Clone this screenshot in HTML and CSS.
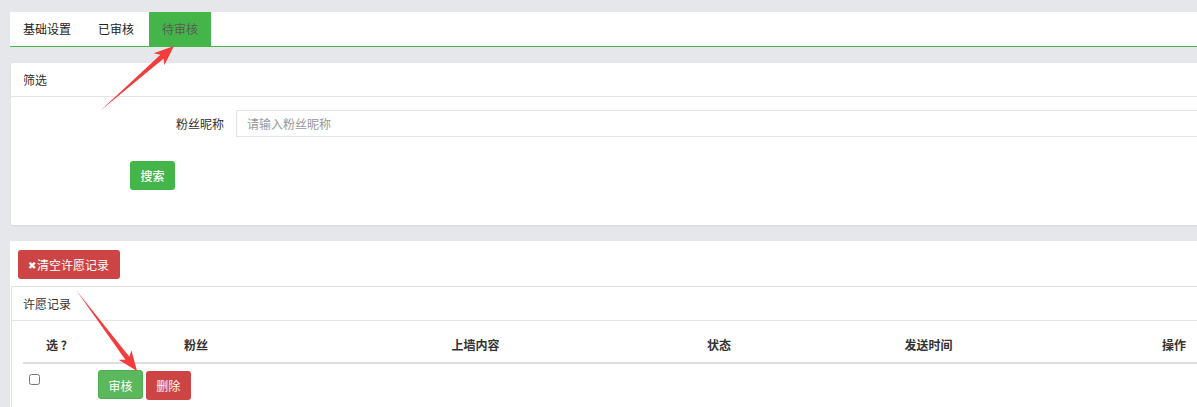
FILE: index.html
```html
<!DOCTYPE html>
<html lang="zh-CN">
<head>
    <meta charset="UTF-8">
    <title>许愿墙 - 待审核</title>
    <link rel="stylesheet" href="styles.css">
</head>
<body>
    <div class="page">
        <!-- 顶部标签 -->
        <ul class="tabs">
            <li class="tab">基础设置</li>
            <li class="tab">已审核</li>
            <li class="tab active">待审核</li>
        </ul>

        <!-- 筛选 -->
        <div class="panel filter-panel">
            <div class="panel-heading">筛选</div>
            <div class="panel-body">
                <div class="form-row">
                    <label class="form-label">粉丝昵称</label>
                    <input class="form-input" type="text" placeholder="请输入粉丝昵称">
                </div>
                <div class="form-actions">
                    <button class="btn btn-green">搜索</button>
                </div>
            </div>
        </div>

        <!-- 许愿记录 -->
        <div class="record-wrap">
            <div class="toolbar">
                <button class="btn btn-red btn-clear"><span class="icon-x">✖</span>清空许愿记录</button>
            </div>
            <div class="panel record-panel">
                <div class="panel-heading">许愿记录</div>
                <div class="panel-body">
                    <table class="table">
                        <colgroup>
                            <col style="width: 67px">
                            <col style="width: 212px">
                            <col style="width: 347px">
                            <col style="width: 140px">
                            <col style="width: 279px">
                            <col style="width: 212px">
                        </colgroup>
                        <thead>
                            <tr>
                                <th>选 ?</th>
                                <th>粉丝</th>
                                <th>上墙内容</th>
                                <th>状态</th>
                                <th>发送时间</th>
                                <th>操作</th>
                            </tr>
                        </thead>
                        <tbody>
                            <tr>
                                <td><input class="check" type="checkbox"></td>
                                <td class="ops">
                                    <button class="btn btn-success">审核</button>
                                    <button class="btn btn-red">删除</button>
                                </td>
                                <td></td>
                                <td></td>
                                <td></td>
                                <td></td>
                            </tr>
                        </tbody>
                    </table>
                </div>
            </div>
        </div>
    </div>

    <!-- 标注箭头 -->
    <svg class="marks" width="1197" height="407" viewBox="0 0 1197 407">
        <polygon points="100,111 163.7,58.5 164.3,65.2 174,46 153.7,53.2 160.4,54.7" fill="#f33c3c"/>
        <polygon points="76,290 125.4,359.7 118.6,359.8 137,371 131.4,350.2 129.4,356.7" fill="#f33c3c"/>
    </svg>
</body>
</html>
```

FILE: styles.css
```css
* {
    margin: 0;
    padding: 0;
    box-sizing: border-box;
}

body {
    font-family: "Noto Sans CJK SC", "Noto Sans", sans-serif;
    font-size: 12px;
    color: #333;
    background: #e6e7ea;
    overflow: hidden;
    position: relative;
    width: 1197px;
    height: 407px;
}

.page {
    width: 1300px;
    padding: 12px 0 0 10px;
}

/* tabs */
.tabs {
    list-style: none;
    display: flex;
    background: #fff;
    height: 35px;
    border-bottom: 1px solid #44b549;
}

.tab {
    padding: 0 13px;
    margin-right: 2px;
    line-height: 34px;
    height: 34px;
    color: #222;
}

.tab:first-child {
    margin-right: 1px;
}

.tab.active {
    background: #44b549;
    color: #5a5a5a;
}

/* panels */
.panel {
    background: #fff;
    margin-left: 1px;
    border-radius: 2px;
}

.filter-panel {
    margin-top: 16px;
    box-shadow: 0 1px 2px rgba(0, 0, 0, 0.08);
}

.panel-heading {
    height: 34px;
    line-height: 33px;
    padding-left: 12px;
    border-bottom: 1px solid #e3e3e3;
    color: #333;
}

.filter-panel .panel-body {
    padding: 13px 0 35px;
}

.form-row {
    display: flex;
    align-items: center;
}

.form-label {
    width: 213px;
    text-align: right;
    margin-right: 12px;
    color: #333;
}

.form-input {
    flex: 1;
    height: 27px;
    border: 1px solid #e3e4e7;
    padding-left: 10px;
    font-family: inherit;
    font-size: 12px;
    color: #333;
    outline: none;
}

.form-input::placeholder {
    color: #999;
}

.form-actions {
    margin-top: 24px;
    padding-left: 119px;
}

/* buttons */
.btn {
    border: none;
    border-radius: 3px;
    height: 29px;
    padding: 0 10px;
    font-family: inherit;
    font-size: 12px;
    color: #fff;
    cursor: pointer;
    line-height: 29px;
}

.btn-green {
    background: #44b549;
    font-weight: 500;
    width: 45px;
    padding: 0;
}

.btn-success {
    background: #5cb85c;
    border: 1px solid #4cae4c;
}

.btn-red {
    background: #cc4444;
}

.btn-clear {
    padding: 0 11px 0 10px;
    display: inline-flex;
    align-items: center;
}

.icon-x {
    font-size: 10px;
    margin-right: 1px;
}

/* records */
.record-wrap {
    margin-top: 16px;
    background: #fff;
}

.toolbar {
    padding: 9px 0 7px 8px;
}

.record-panel {
    border-top: 1px solid #e3e3e3;
    border-left: 1px solid #e3e3e3;
}

.record-panel .panel-heading {
    height: 34px;
    padding-left: 11px;
}

.record-panel .panel-body {
    padding: 5px 0 10px 11px;
}

.table {
    border-collapse: collapse;
    table-layout: fixed;
    width: 1257px;
}

.table th {
    font-weight: 700;
    text-align: center;
    padding: 8px 8px 6px;
    line-height: 22px;
    border-bottom: 2px solid #ddd;
    color: #333;
}

.table td {
    padding: 6px 6px;
    vertical-align: top;
    height: 36px;
}

.check {
    width: 11px;
    height: 11px;
    margin-top: 4px;
}

.ops {
    white-space: nowrap;
    padding-left: 8px !important;
}

.ops .btn {
    width: 45px;
    padding: 0;
    text-align: center;
}

/* annotation arrows */
.marks {
    position: absolute;
    left: 0;
    top: 0;
    pointer-events: none;
}
```
